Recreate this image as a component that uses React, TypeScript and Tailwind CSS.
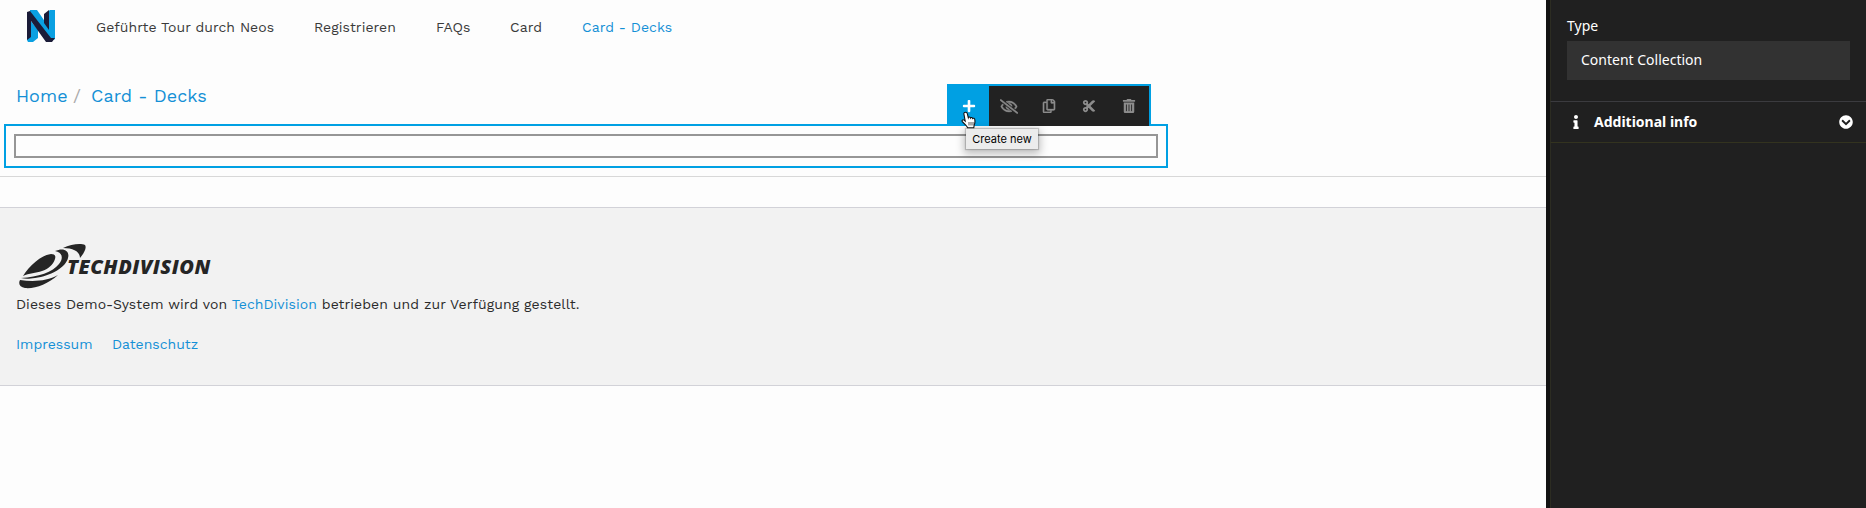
import React from "react";
import { FaPlus, FaRegEyeSlash, FaRegCopy, FaCut, FaTrashAlt, FaInfo, FaChevronCircleDown } from "react-icons/fa";

const navItems = [
  { label: "Geführte Tour durch Neos", cls: "w-[218px] text-[#3a3a3a]" },
  { label: "Registrieren", cls: "w-[122px] text-[#3a3a3a]" },
  { label: "FAQs", cls: "w-[74px] text-[#3a3a3a]" },
  { label: "Card", cls: "w-[72px] text-[#3a3a3a]" },
  { label: "Card - Decks", cls: "text-[#1490d6]" },
];

function NeosLogo() {
  return (
    <svg className="block h-8 w-7" viewBox="0 0 28 32">
      <path d="M3 0h7l11 16V2l2-2h5v29l-4 2L3 2z" fill="#0aa0e2" />
      <path d="M17 4l5-4v20l-5-7z" fill="#1b1c38" />
      <path d="M22 1l2-1h4v29l-3 1-3-6z" fill="#0aa0e2" />
      <path d="M3 10l8 10v8l-5 4H1l-1-2z" fill="#0aa0e2" />
      <path d="M0 2l3-1 21 27 4 0-3 4h-6L4 11v16l-4 3z" fill="#1b1c38" />
    </svg>
  );
}

function TechDivisionLogo() {
  return (
    <div className="flex h-[46px] w-[200px] items-start">
      <svg className="block h-[46px] w-[68px] shrink-0" viewBox="0 0 68 46" fill="#252525">
        <path d="M4 33C10 23 22 12 32 11c4 0 5 2 4 5-2 6-7 10-13 12-6 2-13 2-19 5z" />
        <path d="M36 8c9-4 15 0 13 7-2 9-17 18-33 20-6 1-10 1-14 0 17-1 32-6 38-14 5-6 3-12-4-13z" />
        <path d="M44 5C52 1 62 0 66 2c2 3-1 8-5 13 0-6-6-10-17-10z" />
        <path d="M1 37c14 2 27 1 38-5-10 9-23 14-33 13-5-1-7-4-5-8z" />
      </svg>
      <span className="-ml-[20px] mt-[14px] whitespace-nowrap font-['Open_Sans',sans-serif] text-[20px] font-extrabold italic leading-[20px] tracking-[0.5px] text-[#252525]">
        TECHDIVISION
      </span>
    </div>
  );
}

function HandCursor() {
  return (
    <svg className="absolute left-[14px] top-[25px] z-20 h-[18px] w-[16px]" viewBox="0 0 16 18">
      <path
        d="M4.6 1.2c1 0 1.600.8 1.800 1.700l.9 3.800c.3-.9 2-.9 2.200.3.5-.8 1.900-.6 2.100.5.7-.6 2.100-.2 2.200 1.100.3 1.800.2 3.800-.6 5.400l-.4 2.800H6.600c-.4-1.200-1.300-2-2.100-3L1.300 10.600c-.8-1.300.6-2.300 1.700-1.500l1.200 1L2.900 3c-.2-1 .8-1.800 1.700-1.800z"
        fill="#fff"
        stroke="#111"
        strokeWidth="1.1"
      />
      <path d="M8 11v3.500M10 11v3.500M12 11v3.500" stroke="#222" strokeWidth="0.8" />
    </svg>
  );
}

function Toolbar() {
  return (
    <div className="absolute left-[941px] top-[-42px] flex h-[42px] w-[204px] border-r-2 border-t-2 border-[#00a0e3] bg-[#222222] text-[#8c8c8c]">
      <div className="flex w-[42px] items-center justify-center bg-[#00a0e3] pl-[2px] text-white">
        <FaPlus size={14} />
      </div>
      <div className="flex w-10 items-center justify-center"><FaRegEyeSlash size={15} className="h-[15px] w-[18px] stroke-current [stroke-width:18]" /></div>
      <div className="flex w-10 items-center justify-center"><FaRegCopy size={14} className="stroke-current [stroke-width:12]" /></div>
      <div className="flex w-10 items-center justify-center"><FaCut size={14} /></div>
      <div className="flex w-10 items-center justify-center"><FaTrashAlt size={14} /></div>
      <HandCursor />
      <div className="absolute left-[19px] top-[43px] z-10 flex h-[20px] w-[72px] items-center justify-center whitespace-nowrap bg-[#ececec] font-[Inter,sans-serif] text-[11px] text-black shadow-[0_3px_9px_2px_rgba(0,0,0,0.25),0_0_1px_1px_rgba(0,0,0,0.18)]">
        Create new
      </div>
    </div>
  );
}

export default function App() {
  return (
    <div className="flex h-[508px] w-[1866px] overflow-hidden bg-[#fdfdfd]">
      <main className="flex w-[1546px] shrink-0 flex-col font-['Work_Sans',Inter,sans-serif]">
        <header className="flex h-[56px] items-start pl-[27px] pt-[10px]">
          <NeosLogo />
          <nav className="ml-[41px] flex pt-[7px] text-[14px] leading-5 tracking-[0.05px]">
            {navItems.map((item) => (
              <a key={item.label} className={`block whitespace-nowrap ${item.cls}`}>{item.label}</a>
            ))}
          </nav>
        </header>
        <div className="flex h-[68px] items-start pl-4 pt-[27px] text-[18px] leading-[26px] tracking-[0.05px] text-[#1490d6]">
          <a className="w-[57px]">Home</a>
          <span className="w-[18px] text-[#aaaaaa]">/</span>
          <a>Card - Decks</a>
        </div>
        <section className="relative ml-1 h-[44px] w-[1164px] border-2 border-[#00a0e3] p-2">
          <div className="h-[24px] border-2 border-[#969696]" />
          <Toolbar />
        </section>
        <div className="mt-2 h-px bg-[#d8d8d8]" />
        <footer className="mt-[30px] flex h-[179px] flex-col border-y border-[#d2d2d8] bg-[#f2f2f2] pl-4 text-[14px] leading-5 text-[#2b2b2b]">
          <div className="ml-[3px] mt-[35px]"><TechDivisionLogo /></div>
          <p className="mt-[5px] whitespace-nowrap tracking-[0.07px]">
            Dieses Demo-System wird von <a className="text-[#1490d6]">TechDivision</a> betrieben und zur Verfügung gestellt.
          </p>
          <div className="mt-5 flex text-[#1490d6]">
            <a className="w-[96px]">Impressum</a>
            <a>Datenschutz</a>
          </div>
        </footer>
      </main>
      <aside className="w-[320px] border-l-4 border-[#121212] bg-[#202020] font-['Noto_Sans',sans-serif] text-[14px] text-white">
        <div className="h-[101px] border-l border-[#2c2c22] pl-4 pr-4 pt-4">
          <div className="h-[25px] leading-5">Type</div>
          <div className="flex h-[39px] items-center bg-[#323232] pb-[2px] pl-[14px]">Content Collection</div>
        </div>
        <div className="flex h-[42px] items-center border-y border-l border-b-[#33331f] border-l-[#2c2c22] border-t-[#3b3b3f] pb-px pl-[18px] pr-[13px] font-bold">
          <FaInfo size={14} />
          <span className="ml-[11px] flex-1">Additional info</span>
          <FaChevronCircleDown size={14} />
        </div>
        <div className="h-[365px] border-l border-[#2c2c22]" />
      </aside>
    </div>
  );
}
